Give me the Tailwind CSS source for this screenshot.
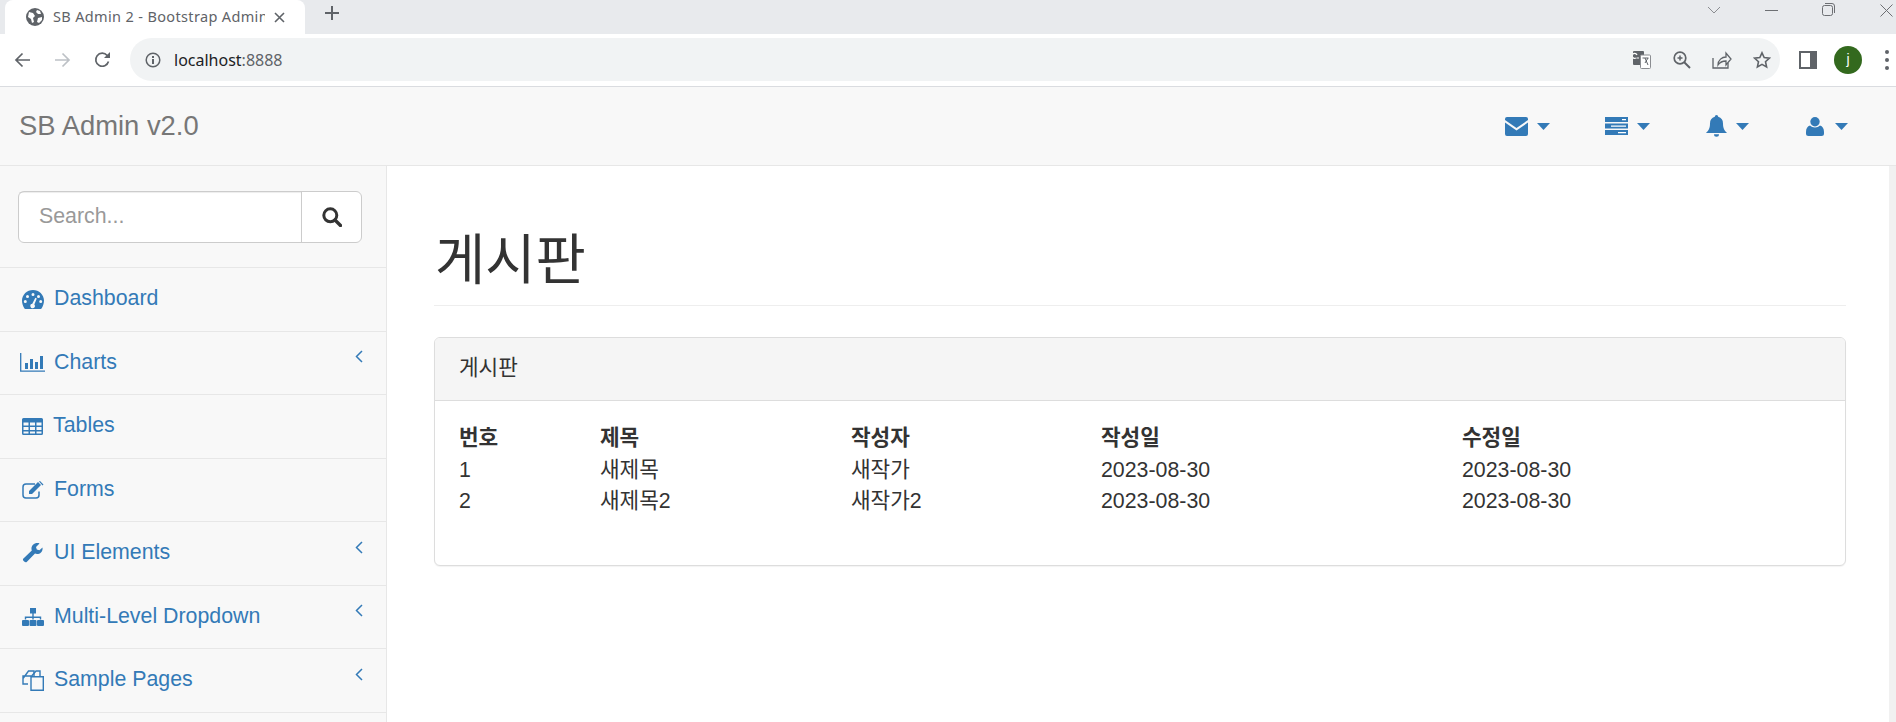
<!DOCTYPE html>
<html lang="ko"><head><meta charset="utf-8"><title>SB Admin 2</title>
<script src="https://cdn.jsdelivr.net/npm/@tailwindcss/browser@4"></script></head>
<body class="h-[722px] w-[1896px] overflow-hidden bg-white font-['Liberation_Sans','Noto_Sans_CJK_KR',sans-serif] text-[#333]">
<!-- tab strip -->
<div class="relative flex h-[34px] items-start bg-[#e8eaed]">
  <div class="ml-[5px] flex h-[34px] w-[300px] items-center rounded-t-lg bg-white pl-[21px] pr-[13px]">
    <svg class="h-[18px] w-[18px] shrink-0" viewBox="0 0 18 18"><circle cx="9" cy="9" r="9" fill="#5f6368"/><path d="M3 4l4 1 2 3-2 2 1 4-2 1-1-4-3-2zM11 2l3 1 1 3-3 0-2-2zM12 10l4-1 0 3-3 3-2-1z" fill="#fff"/></svg>
    <span class="ml-[9px] w-[212px] overflow-hidden whitespace-nowrap font-['Noto_Sans',sans-serif] text-[14.5px] tracking-[0.35px] text-[#5f6368]">SB Admin 2 - Bootstrap Admin</span>
    <svg class="ml-[9px] h-[11px] w-[11px] shrink-0" viewBox="0 0 11 11"><path d="M1 1l9 9M10 1l-9 9" stroke="#5f6368" stroke-width="1.6"/></svg>
  </div>
  <svg class="ml-[20px] mt-[6px] h-[14px] w-[14px]" viewBox="0 0 14 14"><path d="M7 0v14M0 7h14" stroke="#5f6368" stroke-width="2"/></svg>
  <div class="ml-auto flex h-[20px] items-center">
    <svg class="h-[8px] w-[14px]" viewBox="0 0 14 8"><path d="M1 1l6 6 6-6" fill="none" stroke="#8b8d91"/></svg>
    <div class="ml-[44px] h-px w-[13px] bg-[#6d6f73]"></div>
    <svg class="ml-[44px] mt-[-1px] h-[13px] w-[13px]" viewBox="0 0 13 13"><rect x=".5" y="2.5" width="10" height="10" rx="2" fill="none" stroke="#6d6f73"/><path d="M3 .5h7a2.500 2.500 0 0 1 2.500 2.500v7" fill="none" stroke="#6d6f73"/></svg>
    <svg class="ml-[45px] mr-[3px] h-[13px] w-[13px]" viewBox="0 0 13 13"><path d="M.5.5l12 12M12.500.5l-12 12" stroke="#6d6f73"/></svg>
  </div>
</div>
<!-- toolbar -->
<div class="flex h-[53px] items-center border-b border-[#dadce0] bg-white pb-[1px]">
  <svg class="ml-[14px] h-[16px] w-[17px]" viewBox="0 0 17 16"><path d="M16 8H2M8.500 1.500L2 8l6.500 6.500" fill="none" stroke="#5f6368" stroke-width="1.700"/></svg>
  <svg class="ml-[23px] h-[16px] w-[17px]" viewBox="0 0 17 16"><path d="M1 8h14M8.500 1.500L15 8l-6.500 6.500" fill="none" stroke="#bdc1c6" stroke-width="1.700"/></svg>
  <svg class="ml-[23px] h-[17px] w-[17px]" viewBox="0 0 17 17"><path d="M14.500 10.500a6.500 6.500 0 1 1-1.300-6L15 6" fill="none" stroke="#5f6368" stroke-width="1.700"/><path d="M16 1v6h-6z" fill="#5f6368"/></svg>
  <div class="ml-[19px] flex h-[43px] w-[1650px] items-center rounded-full bg-[#f1f3f4] pl-[15px] pr-[9px]">
    <svg class="h-[16px] w-[16px]" viewBox="0 0 16 16"><circle cx="8" cy="8" r="6.800" fill="none" stroke="#5f6368" stroke-width="1.500"/><path d="M7 7h2v5H7zM7 4h2v2H7z" fill="#5f6368"/></svg>
    <span class="ml-[13px] font-['Noto_Sans',sans-serif] text-[16px] text-[#202124]">localhost<span class="text-[#5f6368]">:8888</span></span>
    <svg class="ml-auto h-[18px] w-[18px]" viewBox="0 0 18 18"><rect x="0" y="0" width="11" height="14" rx="1" fill="#5f6368"/><rect x="7.500" y="4" width="10" height="13.500" rx="1" fill="#fff" stroke="#8b8d91"/><path d="M3 7a2.500 2.500 0 1 1 1-3M3.500 7H6" fill="none" stroke="#fff" stroke-width="1.200"/><path d="M9.500 7h6M12 7l3 7M15 7l-3 5" stroke="#5f6368" stroke-width="1" fill="none"/></svg>
    <svg class="ml-[22px] h-[18px] w-[18px]" viewBox="0 0 18 18"><circle cx="7" cy="7" r="5.800" fill="none" stroke="#5f6368" stroke-width="1.700"/><path d="M11 11l6 6" stroke="#5f6368" stroke-width="2"/><path d="M4.500 7h5M7 4.500v5" stroke="#5f6368" stroke-width="1.500"/></svg>
    <svg class="ml-[21px] h-[18px] w-[20px]" viewBox="0 0 20 18"><path d="M1 7v10h15v-5" fill="none" stroke="#5f6368" stroke-width="1.300"/><path d="M6 14c0-5 4-8 8-8V2l5 6-5 6V10c-4 0-6 1-8 4z" fill="none" stroke="#5f6368" stroke-width="1.300"/></svg>
    <svg class="ml-[21px] h-[18px] w-[18px]" viewBox="0 0 18 18"><path d="M9 1.800l2.200 4.800 5.200.6-3.900 3.500 1.100 5.200L9 13.300l-4.600 2.600 1.100-5.200-3.900-3.500 5.200-.6z" fill="none" stroke="#5f6368" stroke-width="1.600"/></svg>
  </div>
  <svg class="ml-[19px] h-[18px] w-[18px]" viewBox="0 0 18 18"><rect width="18" height="18" fill="#5f6368"/><rect x="2" y="2" width="9" height="14" fill="#fff"/></svg>
  <div class="ml-[17px] flex h-[28px] w-[28px] items-center justify-center rounded-full bg-[#33691e] text-[14px] text-white">j</div>
  <div class="ml-[23px] flex flex-col gap-[4px]"><i class="block h-[4px] w-[4px] rounded-full bg-[#5f6368]"></i><i class="block h-[4px] w-[4px] rounded-full bg-[#5f6368]"></i><i class="block h-[4px] w-[4px] rounded-full bg-[#5f6368]"></i></div>
</div>
<!-- navbar -->
<header class="flex h-[79px] items-center border-b border-[#e7e7e7] bg-[#f8f8f8]">
  <span class="ml-[19px] text-[27.4px] text-[#777]">SB Admin v2.0</span>
  <nav class="ml-auto flex items-center pr-[48px] text-[#337ab7]">
    <div class="flex w-[100px] items-center">
      <svg class="h-[19px] w-[23px]" viewBox="0 0 23 19"><path d="M2 0h19a2 2 0 0 1 2 2v1L11.500 11 0 3V2a2 2 0 0 1 2-2zM0 5.500l11.500 8 11.500-8V17a2 2 0 0 1-2 2H2a2 2 0 0 1-2-2z" fill="currentColor"/></svg>
      <svg class="ml-[9px] h-[7px] w-[13px]" viewBox="0 0 13 7"><path d="M0 0h13L6.500 7z" fill="currentColor"/></svg>
    </div>
    <div class="flex w-[101px] items-center">
      <svg class="h-[18px] w-[23px]" viewBox="0 0 23 18"><path d="M0 0h23v5H0zM0 6.500h23v5H0zM0 13h23v5H0z" fill="currentColor"/><path d="M17 2h4v1.200h-4zM6 8.500h15v1.200H6zM13 15h8v1.200h-8z" fill="#fff"/></svg>
      <svg class="ml-[9px] h-[7px] w-[13px]" viewBox="0 0 13 7"><path d="M0 0h13L6.500 7z" fill="currentColor"/></svg>
    </div>
    <div class="flex w-[100px] items-center">
      <svg class="h-[22px] w-[21px]" viewBox="0 0 21 22"><path d="M10.500 0a1.700 1.700 0 0 1 1.700 1.700C15.500 2.500 17 5 17 8.500c0 5 1.500 7 4 9.500H0c2.500-2.500 4-4.500 4-9.500C4 5 5.500 2.500 8.800 1.700A1.700 1.700 0 0 1 10.500 0zM8 19.200h5a2.500 2.500 0 0 1-5 0z" fill="currentColor"/></svg>
      <svg class="ml-[9px] h-[7px] w-[13px]" viewBox="0 0 13 7"><path d="M0 0h13L6.500 7z" fill="currentColor"/></svg>
    </div>
    <div class="flex items-center">
      <svg class="h-[19px] w-[18px]" viewBox="0 0 18 19"><circle cx="9" cy="4.700" r="4.700" fill="currentColor"/><path d="M4 8.500c1.200 1.200 3 1.900 5 1.900s3.800-.7 5-1.900c2.500.7 4 3 4 6.500v1.500a2.500 2.500 0 0 1-2.500 2.500h-13A2.500 2.500 0 0 1 0 16.500V15c0-3.500 1.500-5.800 4-6.500z" fill="currentColor"/></svg>
      <svg class="ml-[11px] h-[7px] w-[13px]" viewBox="0 0 13 7"><path d="M0 0h13L6.500 7z" fill="currentColor"/></svg>
    </div>
  </nav>
</header>
<div class="flex h-[556px]">
  <!-- sidebar -->
  <aside class="w-[387px] shrink-0 border-r border-[#e7e7e7] bg-[#f8f8f8] text-[21.33px] text-[#337ab7]">
    <div class="h-[102px] border-b border-[#e7e7e7] pl-[18px] pr-[24px] pt-[25px]">
      <div class="flex h-[52px] rounded-[6px] border border-[#ccc] bg-white">
        <div class="flex flex-1 items-center border-r border-[#ccc] pl-[20px] text-[#999] shadow-[inset_0_1px_1px_rgba(0,0,0,0.075)]">Search...</div>
        <div class="flex w-[59px] items-center justify-center">
          <svg class="h-[20px] w-[20px]" viewBox="0 0 20 20"><circle cx="8.300" cy="8.300" r="6.500" fill="none" stroke="#333" stroke-width="3"/><path d="M13 13l5.500 5.500" stroke="#333" stroke-width="3.400" stroke-linecap="round"/></svg>
        </div>
      </div>
    </div>
    <a class="flex h-[63.5px] items-center border-b border-[#e7e7e7] pl-[22px] pr-[23px]">
      <svg class="h-[19px] w-[22px]" viewBox="0 0 22 19"><path fill-rule="evenodd" d="M11 0c6 0 11 4.700 11 10.500 0 2.700-.9 5.500-2.300 7.800-.2.400-.6.700-1 .700H3.300c-.4 0-.8-.3-1-.7C.9 16 0 13.200 0 10.500 0 4.700 5 0 11 0zM11 3a1.500 1.500 0 1 0 0 3 1.500 1.500 0 0 0 0-3zM5.500 5a1.500 1.500 0 1 0 0 3 1.500 1.500 0 0 0 0-3zM16.500 5a1.500 1.500 0 1 0 0 3 1.500 1.500 0 0 0 0-3zM3.300 10a1.500 1.500 0 1 0 0 3 1.500 1.500 0 0 0 0-3zM18.700 10a1.500 1.500 0 1 0 0 3 1.500 1.500 0 0 0 0-3zM13.300 7.800l-3 6a2.200 2.200 0 1 0 2 .8l2.500-6.100z" fill="currentColor"/></svg>
      <span class="ml-[10px]">Dashboard</span>
    </a>
    <a class="flex h-[63.5px] items-center border-b border-[#e7e7e7] pl-[20px] pr-[23px]">
      <svg class="h-[19px] w-[25px]" viewBox="0 0 25 19"><path d="M.7 0v18.200H25" fill="none" stroke="currentColor" stroke-width="1.300"/><path d="M5 10h3v6H5zM10 6h3v10h-3zM15 9h3v7h-3zM20 3h3v13h-3z" fill="currentColor"/></svg>
      <span class="ml-[9px]">Charts</span>
      <svg class="ml-auto mt-[-12px] h-[13px] w-[8px]" viewBox="0 0 8 13"><path d="M7 1L1.500 6.500 7 12" fill="none" stroke="currentColor" stroke-width="1.500"/></svg>
    </a>
    <a class="flex h-[63.5px] items-center border-b border-[#e7e7e7] pl-[22px] pr-[23px]">
      <svg class="h-[17px] w-[21px]" viewBox="0 0 21 17"><path fill-rule="evenodd" d="M1.500 0h18A1.500 1.500 0 0 1 21 1.500v14a1.500 1.500 0 0 1-1.500 1.500h-18A1.500 1.500 0 0 1 0 15.500v-14A1.500 1.500 0 0 1 1.500 0zM1.500 4.500v3h5v-3zM8 4.500v3h5v-3zM14.500 4.500v3h5v-3zM1.500 9v3h5V9zM8 9v3h5V9zM14.500 9v3h5V9zM1.500 13.500v2h5v-2zM8 13.500v2h5v-2zM14.500 13.500v2h5v-2z" fill="currentColor"/></svg>
      <span class="ml-[10px]">Tables</span>
    </a>
    <a class="flex h-[63.5px] items-center border-b border-[#e7e7e7] pl-[22px] pr-[23px]">
      <svg class="h-[18px] w-[22px]" viewBox="0 0 22 18"><path d="M17 10.500V14a3 3 0 0 1-3 3H4a3 3 0 0 1-3-3V6a3 3 0 0 1 3-3h9" fill="none" stroke="currentColor" stroke-width="1.500"/><path d="M7 10l9-9 3 3-9 9H7zM17 .5l1-.5 3.500 3.500-1 1z" fill="currentColor"/></svg>
      <span class="ml-[10px]">Forms</span>
    </a>
    <a class="flex h-[63.5px] items-center border-b border-[#e7e7e7] pl-[22px] pr-[23px]">
      <svg class="h-[20px] w-[21px]" viewBox="0 0 21 20"><path d="M20.500 4.500c.5 3.500-2 6.500-5.500 6.500-.8 0-1.400-.1-2-.4L4.700 19c-1.300 1.300-4.800-1.900-3.500-3.200L9.800 7.500C8.500 4 11 0 15.500 0c.8 0 1.500.2 2 .4L14 4l.8 2.500 2.600.7z" fill="currentColor"/></svg>
      <span class="ml-[11px]">UI Elements</span>
      <svg class="ml-auto mt-[-12px] h-[13px] w-[8px]" viewBox="0 0 8 13"><path d="M7 1L1.500 6.500 7 12" fill="none" stroke="currentColor" stroke-width="1.500"/></svg>
    </a>
    <a class="flex h-[63.5px] items-center border-b border-[#e7e7e7] pl-[22px] pr-[23px]">
      <svg class="h-[18px] w-[22px]" viewBox="0 0 22 18"><path d="M8 0h6v5.500h-6zM10.300 5.500h1.400v3h7.500v3h-1.400V10H11.700v1.500h-1.400V10H4.200v1.500H2.800v-3h7.500zM1 12h5a1 1 0 0 1 1 1v4a1 1 0 0 1-1 1H1a1 1 0 0 1-1-1v-4a1 1 0 0 1 1-1zM8.500 12h5a1 1 0 0 1 1 1v4a1 1 0 0 1-1 1h-5a1 1 0 0 1-1-1v-4a1 1 0 0 1 1-1zM16 12h5a1 1 0 0 1 1 1v4a1 1 0 0 1-1 1h-5a1 1 0 0 1-1-1v-4a1 1 0 0 1 1-1z" fill="currentColor"/></svg>
      <span class="ml-[10px]">Multi-Level Dropdown</span>
      <svg class="ml-auto mt-[-12px] h-[13px] w-[8px]" viewBox="0 0 8 13"><path d="M7 1L1.500 6.500 7 12" fill="none" stroke="currentColor" stroke-width="1.500"/></svg>
    </a>
    <a class="flex h-[63.5px] items-center border-b border-[#e7e7e7] pl-[22px] pr-[23px]">
      <svg class="h-[21px] w-[22px]" viewBox="0 0 22 21"><path d="M9 6H1v8l5 0M1 8.500L6.500 1H12v5" fill="none" stroke="currentColor" stroke-width="1.400"/><path d="M9 6.700h12.300V20.300H9z" fill="none" stroke="currentColor" stroke-width="1.400"/><path d="M9 6.700L14 1h4v5.700" fill="none" stroke="currentColor" stroke-width="1.400"/></svg>
      <span class="ml-[10px]">Sample Pages</span>
      <svg class="ml-auto mt-[-12px] h-[13px] w-[8px]" viewBox="0 0 8 13"><path d="M7 1L1.500 6.500 7 12" fill="none" stroke="currentColor" stroke-width="1.500"/></svg>
    </a>
  </aside>
  <!-- main -->
  <main class="min-w-0 flex-1 pl-[47px] pr-[43px]">
    <div class="flex h-[140px] items-end border-b border-[#eee] pl-[1px]">
      <h1 class="pb-[11px] text-[54.6px] font-normal leading-[66px] tracking-[0px]">게시판</h1>
    </div>
    <section class="mt-[31px] h-[229px] rounded-[6px] border border-[#ddd] bg-white shadow-[0_1px_1px_rgba(0,0,0,0.05)]">
      <div class="flex h-[63px] items-center rounded-t-[5px] border-b border-[#ddd] bg-[#f5f5f5] pl-[24px] text-[21.33px]">게시판</div>
      <div class="pl-[24px] pt-[22px]">
        <table class="table-fixed border-collapse text-left text-[21.33px] leading-[31.5px]">
          <colgroup><col class="w-[141px]"><col class="w-[251px]"><col class="w-[250px]"><col class="w-[361px]"><col class="w-[300px]"></colgroup>
          <thead><tr class="font-bold"><th>번호</th><th>제목</th><th>작성자</th><th>작성일</th><th>수정일</th></tr></thead>
          <tbody>
            <tr><td>1</td><td>새제목</td><td>새작가</td><td>2023-08-30</td><td>2023-08-30</td></tr>
            <tr><td>2</td><td>새제목2</td><td>새작가2</td><td>2023-08-30</td><td>2023-08-30</td></tr>
          </tbody>
        </table>
      </div>
    </section>
  </main>
  <div class="w-[7px] shrink-0 bg-[#f1f1f1]"></div>
</div>
</body></html>
